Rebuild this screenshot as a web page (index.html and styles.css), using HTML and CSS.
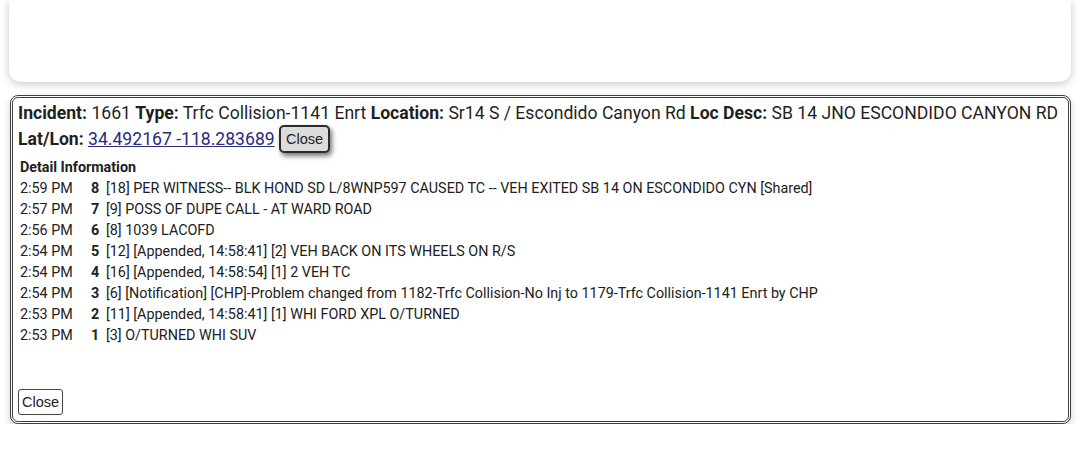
FILE: index.html
```html
<!DOCTYPE html>
<html>
<head>
<meta charset="utf-8">
<link rel="stylesheet" href="styles.css">
</head>
<body>
<div class="top-card"></div>
<div class="panel">
  <div class="head">
    <b>Incident:</b> 1661 <b>Type:</b> Trfc Collision-1141 Enrt <b>Location:</b> Sr14 S / Escondido Canyon Rd <b>Loc Desc:</b> SB 14 JNO ESCONDIDO CANYON RD<br>
    <b>Lat/Lon:</b> <a class="ll" href="#">34.492167 -118.283689</a> <button class="btn-close-top">Close</button>
  </div>
  <div class="detail-title">Detail Information</div>
  <table class="rows">
    <tr><td class="t">2:59 PM</td><td class="n">8</td><td>[18] PER WITNESS-- BLK HOND SD L/8WNP597 CAUSED TC -- VEH EXITED SB 14 ON ESCONDIDO CYN [Shared]</td></tr>
    <tr><td class="t">2:57 PM</td><td class="n">7</td><td>[9] POSS OF DUPE CALL - AT WARD ROAD</td></tr>
    <tr><td class="t">2:56 PM</td><td class="n">6</td><td>[8] 1039 LACOFD</td></tr>
    <tr><td class="t">2:54 PM</td><td class="n">5</td><td>[12] [Appended, 14:58:41] [2] VEH BACK ON ITS WHEELS ON R/S</td></tr>
    <tr><td class="t">2:54 PM</td><td class="n">4</td><td>[16] [Appended, 14:58:54] [1] 2 VEH TC</td></tr>
    <tr><td class="t">2:54 PM</td><td class="n">3</td><td>[6] [Notification] [CHP]-Problem changed from 1182-Trfc Collision-No Inj to 1179-Trfc Collision-1141 Enrt by CHP</td></tr>
    <tr><td class="t">2:53 PM</td><td class="n">2</td><td>[11] [Appended, 14:58:41] [1] WHI FORD XPL O/TURNED</td></tr>
    <tr><td class="t">2:53 PM</td><td class="n">1</td><td>[3] O/TURNED WHI SUV</td></tr>
  </table>
  <div class="foot"><button class="btn-close">Close</button></div>
</div>
</body>
</html>
```
FILE: styles.css
```css
html, body {
  margin: 0;
  padding: 0;
  background: #ffffff;
}
body {
  font-family: Roboto, "Liberation Sans", sans-serif;
  color: #212121;
}
.top-card {
  height: 82px;
  margin: 0 9px;
  background: #fff;
  border-radius: 0 0 12px 12px;
  box-shadow: 0 2px 8px rgba(0,0,0,0.22);
}
.panel {
  margin: 13px 9px 0 10px;
  height: 323px;
  border: 3px double #404040;
  border-radius: 8px;
  background: #fff;
  box-shadow: 0 4px 8px rgba(0,0,0,0.18);
  padding: 0 5px;
  display: flex;
  flex-direction: column;
}
.head {
  font-size: 17.6px;
  line-height: 26px;
  padding-top: 2px;
  color: #1f1f1f;
}
.head b { font-weight: 700; }
.ll {
  color: #2a2a80;
  text-decoration: underline;
}
.btn-close-top {
  font-family: "Liberation Sans", Arial, sans-serif;
  font-size: 14.5px;
  background: #dcdcdc;
  color: #222;
  border: 2px solid #2c2c2c;
  border-radius: 5px;
  padding: 4px 5px;
  box-shadow: 2px 3px 5px rgba(0,0,0,0.55);
  vertical-align: middle;
  margin-top: -2px;
}
.detail-title {
  font-size: 14.3px;
  font-weight: 700;
  margin-top: 4px;
  padding-left: 2px;
  line-height: 20px;
}
.rows {
  border-collapse: collapse;
  font-size: 14.35px;
  line-height: 21px;
  margin-left: 2px;
  margin-top: 1px;
}
.rows td {
  padding: 0;
  white-space: nowrap;
}
.rows td.t { width: 71px; }
.rows td.n { font-weight: 700; width: 15px; }
.foot {
  margin-top: auto;
  padding-bottom: 6px;
}
.btn-close {
  font-family: "Liberation Sans", Arial, sans-serif;
  font-size: 14.5px;
  background: #fff;
  color: #222;
  border: 1px solid #444;
  border-radius: 3px;
  padding: 4px 3px;
}
```
